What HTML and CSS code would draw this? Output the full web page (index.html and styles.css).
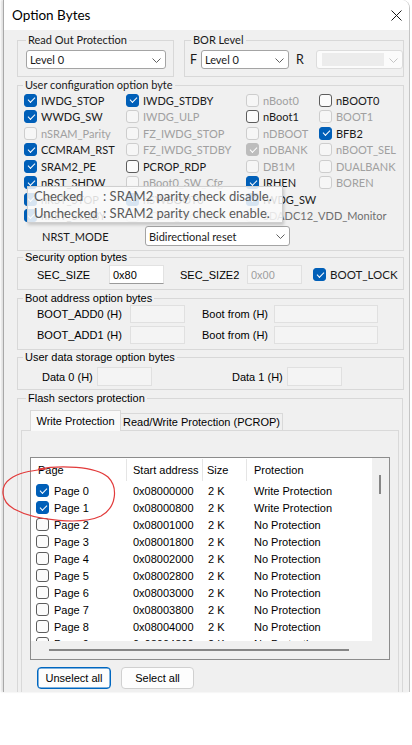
FILE: index.html
```html
<!DOCTYPE html>
<html>
<head>
<meta charset="utf-8">
<title>Option Bytes</title>
<link rel="stylesheet" href="styles.css">
</head>
<body>
<div class="screen">
  <div class="window">
    <div class="titlebar">
      <span class="title">Option Bytes</span>
      <svg class="close" width="11" height="11" viewBox="0 0 11 11"><path d="M0.5 0.5L10.5 10.5M10.5 0.5L0.5 10.5" stroke="#1a1a1a" stroke-width="1"/></svg>
    </div>
    <div class="client">
      <div class="toprow">
        <fieldset class="group rop">
          <legend>Read Out Protection</legend>
          <div class="rop-body">
            <div class="combo w140"><span>Level 0</span><svg class="chev" width="9" height="5" viewBox="0 0 9 5"><polyline points="0.5,0.5 4.5,4.5 8.5,0.5" fill="none" stroke="#606060"/></svg></div>
          </div>
        </fieldset>
        <fieldset class="group bor">
          <legend>BOR Level</legend>
          <div class="bor-body">
            <span class="fl">F</span>
            <div class="combo w89"><span>Level 0</span><svg class="chev" width="9" height="5" viewBox="0 0 9 5"><polyline points="0.5,0.5 4.5,4.5 8.5,0.5" fill="none" stroke="#606060"/></svg></div>
            <span class="fr">R</span>
            <div class="combo combo-dis w88"><span class="dis-field"></span><svg class="chev" width="9" height="5" viewBox="0 0 9 5"><polyline points="0.5,0.5 4.5,4.5 8.5,0.5" fill="none" stroke="#c4c4c4"/></svg></div>
          </div>
        </fieldset>
      </div>

      <fieldset class="group ucfg">
        <legend>User configuration option byte</legend>
        <div class="cb-grid">
          <label class="ck"><span class="cb on"></span>IWDG_STOP</label>
          <label class="ck"><span class="cb on"></span>IWDG_STDBY</label>
          <label class="ck dis"><span class="cb"></span>nBoot0</label>
          <label class="ck"><span class="cb"></span>nBOOT0</label>

          <label class="ck"><span class="cb on"></span>WWDG_SW</label>
          <label class="ck dis"><span class="cb"></span>IWDG_ULP</label>
          <label class="ck"><span class="cb"></span>nBoot1</label>
          <label class="ck dis"><span class="cb"></span>BOOT1</label>

          <label class="ck dis"><span class="cb"></span>nSRAM_Parity</label>
          <label class="ck dis"><span class="cb"></span>FZ_IWDG_STOP</label>
          <label class="ck dis"><span class="cb"></span>nDBOOT</label>
          <label class="ck"><span class="cb on"></span>BFB2</label>

          <label class="ck"><span class="cb on"></span>CCMRAM_RST</label>
          <label class="ck dis"><span class="cb"></span>FZ_IWDG_STDBY</label>
          <label class="ck dis"><span class="cb on"></span>nDBANK</label>
          <label class="ck dis"><span class="cb"></span>nBOOT_SEL</label>

          <label class="ck"><span class="cb on"></span>SRAM2_PE</label>
          <label class="ck"><span class="cb"></span>PCROP_RDP</label>
          <label class="ck dis"><span class="cb"></span>DB1M</label>
          <label class="ck dis"><span class="cb"></span>DUALBANK</label>

          <label class="ck"><span class="cb on"></span>nRST_SHDW</label>
          <label class="ck dis"><span class="cb"></span>nBoot0_SW_Cfg</label>
          <label class="ck"><span class="cb on"></span>IRHEN</label>
          <label class="ck dis"><span class="cb"></span>BOREN</label>

          <label class="ck"><span class="cb on"></span>nRST_STOP</label>
          <label class="ck"><span class="cb on"></span>nSWBOOT0</label>
          <label class="ck"><span class="cb on"></span>IWDG_SW</label>
          <span></span>

          <label class="ck"><span class="cb on"></span>nRST_STDBY</label>
          <label class="ck dis"><span class="cb"></span>VDDA_Monitor</label>
          <label class="ck semi"><span class="cb"></span>SDADC12_VDD_Monitor</label>
          <span></span>
        </div>
        <div class="nrst-row">
          <span class="nrst-lbl">NRST_MODE</span>
          <div class="combo w145"><span>Bidirectional reset</span><svg class="chev" width="9" height="5" viewBox="0 0 9 5"><polyline points="0.5,0.5 4.5,4.5 8.5,0.5" fill="none" stroke="#606060"/></svg></div>
        </div>
      </fieldset>

      <fieldset class="group low sec">
        <legend>Security option bytes</legend>
        <div class="sec-row">
          <span>SEC_SIZE</span>
          <span class="edit">0x80</span>
          <span>SEC_SIZE2</span>
          <span class="edit dis">0x00</span>
          <label class="ck seg"><span class="cb on"></span>BOOT_LOCK</label>
        </div>
      </fieldset>

      <fieldset class="group low boot">
        <legend>Boot address option bytes</legend>
        <div class="boot-grid">
          <span>BOOT_ADD0 (H)</span>
          <span class="edit dis"></span>
          <span>Boot from (H)</span>
          <span class="edit dis wide"></span>
          <span>BOOT_ADD1 (H)</span>
          <span class="edit dis"></span>
          <span>Boot from (H)</span>
          <span class="edit dis wide"></span>
        </div>
      </fieldset>

      <fieldset class="group low udata">
        <legend>User data storage option bytes</legend>
        <div class="udata-row">
          <span>Data 0 (H)</span>
          <span class="edit dis"></span>
          <span>Data 1 (H)</span>
          <span class="edit dis"></span>
        </div>
      </fieldset>

      <fieldset class="group low flash">
        <legend>Flash sectors protection</legend>
        <div class="tabs">
          <div class="tab sel">Write Protection</div>
          <div class="tab">Read/Write Protection (PCROP)</div>
        </div>
        <div class="tabpanel">
          <div class="list">
            <div class="list-main">
              <div class="lrow lhdr">
                <span class="c1">Page</span><span class="c2">Start address</span><span class="c3">Size</span><span class="c4">Protection</span>
              </div>
              <div class="lrow"><span class="c1"><span class="cb on"></span>Page 0</span><span class="c2">0x08000000</span><span class="c3">2 K</span><span class="c4">Write Protection</span></div>
              <div class="lrow"><span class="c1"><span class="cb on"></span>Page 1</span><span class="c2">0x08000800</span><span class="c3">2 K</span><span class="c4">Write Protection</span></div>
              <div class="lrow"><span class="c1"><span class="cb"></span>Page 2</span><span class="c2">0x08001000</span><span class="c3">2 K</span><span class="c4">No Protection</span></div>
              <div class="lrow"><span class="c1"><span class="cb"></span>Page 3</span><span class="c2">0x08001800</span><span class="c3">2 K</span><span class="c4">No Protection</span></div>
              <div class="lrow"><span class="c1"><span class="cb"></span>Page 4</span><span class="c2">0x08002000</span><span class="c3">2 K</span><span class="c4">No Protection</span></div>
              <div class="lrow"><span class="c1"><span class="cb"></span>Page 5</span><span class="c2">0x08002800</span><span class="c3">2 K</span><span class="c4">No Protection</span></div>
              <div class="lrow"><span class="c1"><span class="cb"></span>Page 6</span><span class="c2">0x08003000</span><span class="c3">2 K</span><span class="c4">No Protection</span></div>
              <div class="lrow"><span class="c1"><span class="cb"></span>Page 7</span><span class="c2">0x08003800</span><span class="c3">2 K</span><span class="c4">No Protection</span></div>
              <div class="lrow"><span class="c1"><span class="cb"></span>Page 8</span><span class="c2">0x08004000</span><span class="c3">2 K</span><span class="c4">No Protection</span></div>
              <div class="lrow"><span class="c1"><span class="cb"></span>Page 9</span><span class="c2">0x08004800</span><span class="c3">2 K</span><span class="c4">No Protection</span></div>
            </div>
            <div class="vscroll"><span class="vthumb"></span></div>
            <div class="hscroll"><span class="hthumb"></span></div>
          </div>
          <div class="buttons">
            <button class="btn focus">Unselect all</button>
            <button class="btn">Select all</button>
          </div>
        </div>
      </fieldset>
    </div>
  </div>

  <div class="tooltip">
    <div><span class="tl">Checked</span>: SRAM2 parity check disable.</div>
    <div><span class="tl">Unchecked</span>: SRAM2 parity check enable.</div>
  </div>

  <svg class="annot" width="412" height="745" viewBox="0 0 412 745">
    <path d="M38 469 C60 465, 95 466, 108 477 C118 487, 117 507, 101 516 C82 525, 36 521, 14 509 C0 501, 0 486, 10 479 C18 473, 28 471, 46 469" fill="none" stroke="#e23b3b" stroke-width="1.2"/>
  </svg>
</div>
</body>
</html>
```

FILE: styles.css
```css
* { box-sizing: border-box; }

html, body {
  margin: 0;
  padding: 0;
  background: #ffffff;
}

body {
  font-family: Lato, "Noto Sans", sans-serif;
  font-size: 11px;
  color: #1a1a1a;
}

.screen {
  position: relative;
  width: 412px;
  height: 745px;
  overflow: hidden;
}

.window {
  margin-left: 3px;
  width: 407px;
  border-left: 1px solid #a8a8a8;
  border-right: 1px solid #c4c4c4;
  border-top-right-radius: 8px;
  box-shadow: -2px 0 2px rgba(0, 0, 0, 0.12);
}

.titlebar {
  height: 30px;
  background: #fff;
  display: flex;
  align-items: center;
  justify-content: space-between;
  padding: 0 7px 0 8px;
  border-top-right-radius: 8px;
}

.title {
  font-size: 13.5px;
  color: #000;
}

.client {
  background: #f0f0f0;
  height: 662px;
  overflow: hidden;
  padding: 0 5px 0 13px;
}

/* group boxes */
.group {
  margin: 0;
  padding: 0;
  min-width: 0;
  border: 1px solid #d8d8d8;
}

.group > legend {
  margin-left: 5px;
  padding: 0 2px;
  line-height: 14px;
  font-size: 11px;
  white-space: nowrap;
}

.low > legend {
  font-family: "Liberation Sans", Arial, sans-serif;
  font-size: 11px;
  line-height: 12px;
}

.toprow {
  display: flex;
  gap: 10px;
  margin-top: 3px;
}

.rop { width: 157px; }
.rop > legend { margin-left: 8px; }
.rop-body { padding: 3px 7px 7px 8px; }

.bor { flex: 1; }
.bor > legend { margin-left: 6px; }
.bor-body {
  display: flex;
  align-items: center;
  padding: 3px 0 7px 5px;
}
.fl { width: 11px; font-size: 12.5px; }
.fr { width: 20px; margin-left: 7px; font-size: 12.5px; }

/* combo boxes */
.combo {
  height: 19px;
  background: #fff;
  border: 1px solid #a4a4a4;
  border-radius: 3px;
  display: flex;
  align-items: center;
  justify-content: space-between;
  padding: 0 4px 0 3px;
  font-size: 11px;
  white-space: nowrap;
}
.combo .chev { flex: none; margin-top: 1px; }
.w140 { width: 140px; }
.w89 { width: 89px; }
.w88 { width: 88px; }
.w145 { width: 145px; height: 20px; }

.combo-dis {
  border-color: #dcdcdc;
  background: #fbfbfb;
  padding: 2px 4px 2px 5px;
}
.dis-field {
  width: 62px;
  height: 13px;
  background: #ececec;
}

/* user config */
.ucfg { margin-top: 1px; }

.cb-grid {
  display: grid;
  grid-template-columns: 102px 120px 73px 1fr;
  grid-auto-rows: 16.5px;
  padding-left: 6px;
}

.ck {
  display: flex;
  align-items: center;
  gap: 4px;
  white-space: nowrap;
  font-size: 11px;
  color: #1a1a1a;
}
.ck.dis { color: #a0a0a0; }
.ck.semi { color: #6e6e6e; }

.cb {
  position: relative;
  flex: none;
  display: inline-block;
  width: 13px;
  height: 13px;
  border: 1px solid #5c5c5c;
  border-radius: 3px;
  background: #fbfbfb;
}
.ck.dis .cb, .ck.semi .cb {
  border-color: #cdcdcd;
  background: #f6f6f6;
}
.cb.on {
  background: #005fb8;
  border-color: #005fb8;
}
.ck.dis .cb.on {
  background: #bdbdbd;
  border-color: #bdbdbd;
}
.cb.on::after {
  content: "";
  position: absolute;
  left: 2.5px;
  top: 2.6px;
  width: 6px;
  height: 3px;
  border-left: 1.2px solid #fff;
  border-bottom: 1.2px solid #fff;
  transform: rotate(-45deg);
}

.nrst-row {
  display: flex;
  align-items: center;
  margin-top: 2px;
  padding: 0 0 4px 24px;
}
.nrst-lbl {
  width: 103px;
  font-size: 11px;
}

/* lower groups */
.low {
  font-family: "Liberation Sans", Arial, sans-serif;
  font-size: 11px;
  color: #000;
}

.edit {
  display: flex;
  align-items: center;
  width: 55px;
  height: 19px;
  padding-left: 3px;
  background: #fff;
  border: 1px solid #e2e2e2;
  border-bottom-color: #9a9a9a;
  font-size: 11px;
}
.edit.dis {
  background: #f4f4f4;
  border-color: #e0e0e0;
  color: #9d9d9d;
}

.sec .sec-row {
  display: grid;
  grid-template-columns: 72px 71px 67px 66px auto;
  align-items: center;
  padding: 2px 0 5px 19px;
}
.sec .ck {
  font-family: Lato, "Noto Sans", sans-serif;
  font-size: 11.5px;
}

.boot { margin-top: 2px; }
.boot-grid {
  display: grid;
  grid-template-columns: 93px 72px 72px 104px;
  grid-auto-rows: 18px;
  row-gap: 3px;
  align-items: center;
  padding: 1px 0 5px 19px;
}
.boot-grid .edit { height: 18px; }
.boot-grid .edit.wide { width: 104px; }

.udata { margin-top: 1px; }
.udata-row {
  display: grid;
  grid-template-columns: 55px 135px 55px 55px;
  align-items: center;
  padding: 4px 0 3px 24px;
}

/* flash sectors */
.flash {
  margin-top: 2px;
  margin-right: 1px;
  padding: 0 3px 0 3px;
}

.tabs {
  display: flex;
  align-items: flex-end;
  margin-top: 6px;
  padding-left: 9px;
  height: 20px;
}
.tab {
  height: 17px;
  border: 1px solid #d9d9d9;
  border-bottom: none;
  display: flex;
  align-items: center;
  justify-content: center;
  background: #f0f0f0;
  white-space: nowrap;
}
.tab.sel {
  height: 21px;
  width: 91px;
  background: #f9f9f9;
  margin-bottom: -1px;
  position: relative;
  z-index: 1;
  padding-bottom: 1px;
}
.tab:not(.sel) {
  width: 163px;
  margin-left: -1px;
}

.tabpanel {
  border: 1px solid #d9d9d9;
  height: 300px;
  padding: 26px 0 0 8px;
}

.list {
  display: grid;
  grid-template-columns: 341px 17px;
  grid-template-rows: 183px 18px;
  width: 360px;
  height: 203px;
  border: 1px solid #8c8c8c;
  background: #fff;
}

.list-main {
  overflow: hidden;
}

.lrow {
  display: grid;
  grid-template-columns: 96px 76px 44px 125px;
  height: 17px;
  align-items: center;
  white-space: nowrap;
}
.lrow .c1 { display: flex; align-items: center; gap: 5px; padding-left: 5px; }
.lrow .c2 { padding-left: 6px; }
.lrow .c3 { padding-left: 5px; }
.lrow .c4 { padding-left: 7px; }

.lhdr {
  height: 24px;
  align-items: stretch;
}
.lhdr span {
  display: flex;
  align-items: center;
  margin: 1px 0 1px 0;
}
.lhdr .c1 { padding-left: 7px; border-right: 1px solid #e5e5e5; }
.lhdr .c2 { padding-left: 6px; border-right: 1px solid #e5e5e5; }
.lhdr .c3 { padding-left: 4px; border-right: 1px solid #e5e5e5; }
.lhdr .c4 { padding-left: 7px; }

.vscroll {
  background: #f0f0f0;
  padding: 17px 0 0 7px;
}
.vthumb {
  display: block;
  width: 2px;
  height: 19px;
  background: #868686;
}
.hscroll {
  grid-column: 1 / span 2;
  background: #f0f0f0;
  padding: 8px 0 0 18px;
}
.hthumb {
  display: block;
  width: 300px;
  height: 2px;
  background: #868686;
}

.buttons {
  display: flex;
  gap: 10px;
  margin-top: 7px;
  padding-left: 7px;
}
.btn {
  height: 22px;
  font-family: "Liberation Sans", Arial, sans-serif;
  font-size: 11px;
  color: #000;
  background: #fdfdfd;
  border: 1px solid #d0d0d0;
  border-radius: 4px;
  padding: 0;
}
.btn.focus {
  width: 74px;
  border-color: #0067c0;
  box-shadow: inset 0 0 0 0.5px #0067c0;
}
.btn:not(.focus) { width: 73px; }

/* overlays */
.tooltip {
  position: absolute;
  left: 27px;
  top: 186px;
  width: 256px;
  height: 37px;
  padding: 1px 6px;
  background: rgba(250, 250, 250, 0.86);
  border: 1px solid #cfcfcf;
  box-shadow: 1px 2px 3px rgba(0, 0, 0, 0.18);
  font-size: 13px;
  line-height: 17px;
  color: #5a5a5a;
  white-space: nowrap;
}
.tl {
  display: inline-block;
  width: 69px;
}

.annot {
  position: absolute;
  left: 0;
  top: 0;
  pointer-events: none;
}
```
